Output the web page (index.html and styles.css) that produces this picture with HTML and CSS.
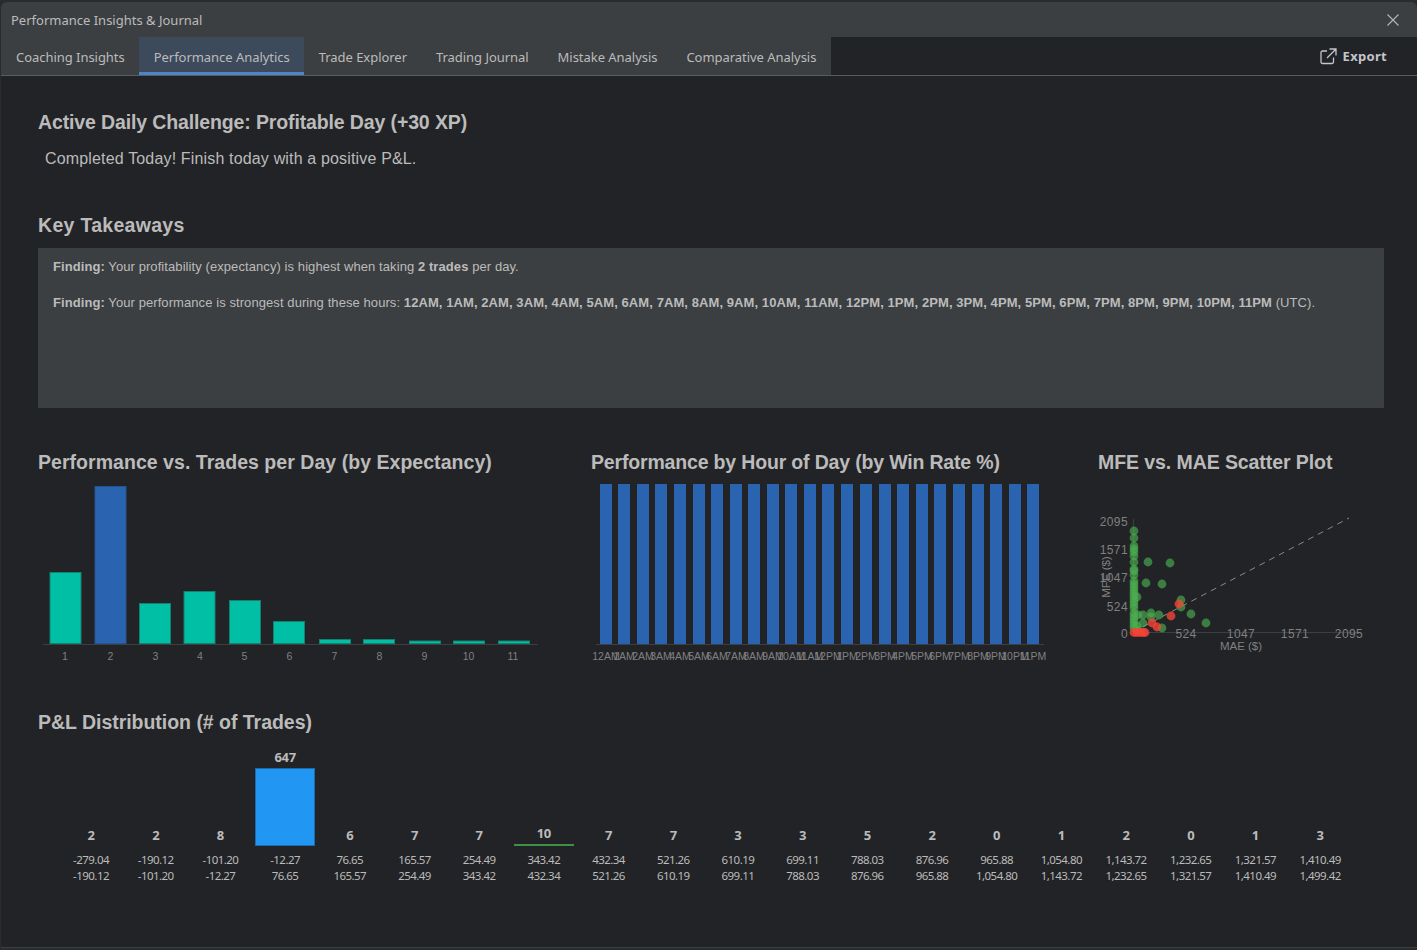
FILE: index.html
```html
<!DOCTYPE html>
<html lang="en">
  <head>
    <meta charset="utf-8" />
    <title>Performance Insights &amp; Journal</title>
    <link rel="stylesheet" href="styles.css">
  </head>
  <body>
    <div class="window">
      <header class="titlebar">
        <span class="title">Performance Insights &amp; Journal</span>
        <svg class="close" width="14" height="14" viewBox="0 0 14 14"><path d="M1.5 1.5 L12.5 12.5 M12.5 1.5 L1.5 12.5" /></svg>
      </header>

      <nav class="tabbar">
        <div class="tabs">
          <a class="tab">Coaching Insights</a>
          <a class="tab active">Performance Analytics</a>
          <a class="tab">Trade Explorer</a>
          <a class="tab">Trading Journal</a>
          <a class="tab">Mistake Analysis</a>
          <a class="tab">Comparative Analysis</a>
        </div>
        <a class="export">
          <svg width="17" height="17" viewBox="0 0 17 17"><path d="M7 3 H2.5 A1.5 1.5 0 0 0 1 4.5 V14 A1.5 1.5 0 0 0 2.5 15.5 H12 A1.5 1.5 0 0 0 13.5 14 V9.5 M7 10 L15.5 1.5 M9.5 1 H16 V7.5" /></svg>
          Export
        </a>
      </nav>

      <main class="content">
        <h2 class="challenge-title">Active Daily Challenge: Profitable Day (+30 XP)</h2>
        <p class="challenge-text">Completed Today! Finish today with a positive P&amp;L.</p>

        <h2 class="takeaways-title">Key Takeaways</h2>
        <div class="takeaways">
          <p><b>Finding:</b> Your profitability (expectancy) is highest when taking <b>2 trades</b> per day.</p>
          <p><b>Finding:</b> Your performance is strongest during these hours: <b>12AM, 1AM, 2AM, 3AM, 4AM, 5AM, 6AM, 7AM, 8AM, 9AM, 10AM, 11AM, 12PM, 1PM, 2PM, 3PM, 4PM, 5PM, 6PM, 7PM, 8PM, 9PM, 10PM, 11PM</b> (UTC).</p>
        </div>

        <div class="charts">
          <section>
            <h2 class="days-title">Performance vs. Trades per Day (by Expectancy)</h2>
            <svg class="chart" width="510" height="190" viewBox="38 478 510 190">
              <g class="teal">
                <rect x="50" y="572.5" width="31" height="71" />
                <rect x="139.5" y="603.5" width="31" height="40" />
                <rect x="184" y="591.5" width="31" height="52" />
                <rect x="229.5" y="600.5" width="31" height="43" />
                <rect x="273.5" y="621.5" width="31" height="22" />
                <rect x="319.5" y="639.5" width="31" height="4" />
                <rect x="363.5" y="639.5" width="31" height="4" />
                <rect x="409.5" y="641" width="31" height="2.5" />
                <rect x="453.5" y="641" width="31" height="2.5" />
                <rect x="498.5" y="641" width="31" height="2.5" />
              </g>
              <rect class="blue" x="95" y="486.5" width="31" height="157" />
              <line class="axis" x1="43" y1="644.5" x2="538" y2="644.5" />
              <g class="tick">
                <text x="65" y="660">1</text>
                <text x="110.5" y="660">2</text>
                <text x="155.5" y="660">3</text>
                <text x="200" y="660">4</text>
                <text x="244.5" y="660">5</text>
                <text x="289.5" y="660">6</text>
                <text x="334.5" y="660">7</text>
                <text x="379.5" y="660">8</text>
                <text x="424.5" y="660">9</text>
                <text x="468.5" y="660">10</text>
                <text x="513" y="660">11</text>
              </g>
            </svg>
          </section>

          <section>
            <h2 class="hour-title">Performance by Hour of Day (by Win Rate %)</h2>
            <svg class="chart" width="470" height="190" viewBox="585 478 470 190">
              <g class="hour">
                <rect x="600" y="484" width="12" height="160" />
                <rect x="618" y="484" width="12" height="160" />
                <rect x="637" y="484" width="12" height="160" />
                <rect x="655" y="484" width="12" height="160" />
                <rect x="674" y="484" width="12" height="160" />
                <rect x="693" y="484" width="12" height="160" />
                <rect x="711" y="484" width="12" height="160" />
                <rect x="730" y="484" width="12" height="160" />
                <rect x="748" y="484" width="12" height="160" />
                <rect x="767" y="484" width="12" height="160" />
                <rect x="785" y="484" width="12" height="160" />
                <rect x="804" y="484" width="12" height="160" />
                <rect x="822" y="484" width="12" height="160" />
                <rect x="841" y="484" width="12" height="160" />
                <rect x="860" y="484" width="12" height="160" />
                <rect x="879" y="484" width="12" height="160" />
                <rect x="897" y="484" width="12" height="160" />
                <rect x="916" y="484" width="12" height="160" />
                <rect x="934" y="484" width="12" height="160" />
                <rect x="953" y="484" width="12" height="160" />
                <rect x="972" y="484" width="12" height="160" />
                <rect x="990" y="484" width="12" height="160" />
                <rect x="1009" y="484" width="12" height="160" />
                <rect x="1027" y="484" width="12" height="160" />
              </g>
              <line class="axis" x1="596" y1="644.5" x2="1044" y2="644.5" />
              <g class="tick">
                <text x="606" y="660">12AM</text>
                <text x="624" y="660">1AM</text>
                <text x="643" y="660">2AM</text>
                <text x="661" y="660">3AM</text>
                <text x="680" y="660">4AM</text>
                <text x="699" y="660">5AM</text>
                <text x="717" y="660">6AM</text>
                <text x="736" y="660">7AM</text>
                <text x="754" y="660">8AM</text>
                <text x="773" y="660">9AM</text>
                <text x="791" y="660">10AM</text>
                <text x="810" y="660">11AM</text>
                <text x="828" y="660">12PM</text>
                <text x="847" y="660">1PM</text>
                <text x="866" y="660">2PM</text>
                <text x="885" y="660">3PM</text>
                <text x="903" y="660">4PM</text>
                <text x="922" y="660">5PM</text>
                <text x="940" y="660">6PM</text>
                <text x="959" y="660">7PM</text>
                <text x="978" y="660">8PM</text>
                <text x="996" y="660">9PM</text>
                <text x="1015" y="660">10PM</text>
                <text x="1033" y="660">11PM</text>
              </g>
            </svg>
          </section>

          <section>
            <h2 class="scatter-title">MFE vs. MAE Scatter Plot</h2>
            <svg class="chart" width="270" height="190" viewBox="1098 478 270 190">
              <line class="axis" x1="1133.5" y1="519" x2="1133.5" y2="632.5" />
              <line class="axis" x1="1133" y1="632.5" x2="1360" y2="632.5" />
              <line class="diagonal" x1="1133" y1="632" x2="1349" y2="518" />
              <g class="win">
                <circle cx="1134" cy="531" r="4.4" />
                <circle cx="1134" cy="538" r="4.4" />
                <circle cx="1134" cy="546" r="4.4" />
                <circle cx="1134" cy="549" r="4.4" />
                <circle cx="1134" cy="552" r="4.4" />
                <circle cx="1134" cy="556" r="4.4" />
                <circle cx="1134" cy="562" r="4.4" />
                <circle cx="1134" cy="569" r="4.4" />
                <circle cx="1134" cy="571" r="4.4" />
                <circle cx="1134" cy="575" r="4.4" />
                <circle cx="1134" cy="581" r="4.4" />
                <circle cx="1134" cy="584" r="4.4" />
                <circle cx="1134" cy="587" r="4.4" />
                <circle cx="1134" cy="590" r="4.4" />
                <circle cx="1134" cy="593" r="4.4" />
                <circle cx="1134" cy="596" r="4.4" />
                <circle cx="1134" cy="599" r="4.4" />
                <circle cx="1134" cy="602" r="4.4" />
                <circle cx="1134" cy="605" r="4.4" />
                <circle cx="1134" cy="608" r="4.4" />
                <circle cx="1134" cy="613" r="4.4" />
                <circle cx="1134" cy="616" r="4.4" />
                <circle cx="1134" cy="619" r="4.4" />
                <circle cx="1134" cy="622" r="4.4" />
                <circle cx="1134" cy="625" r="4.4" />
                <circle cx="1134" cy="628" r="4.4" />
                <circle cx="1137" cy="626" r="4.4" />
                <circle cx="1138" cy="630" r="4.4" />
                <circle cx="1137" cy="597" r="4.4" />
                <circle cx="1138" cy="615" r="4.4" />
                <circle cx="1143" cy="615" r="4.4" />
                <circle cx="1143" cy="623" r="4.4" />
                <circle cx="1148" cy="562" r="4.4" />
                <circle cx="1170" cy="563" r="4.4" />
                <circle cx="1146" cy="583" r="4.4" />
                <circle cx="1162" cy="584" r="4.4" />
                <circle cx="1181" cy="600" r="4.4" />
                <circle cx="1181" cy="607" r="4.4" />
                <circle cx="1191" cy="614" r="4.4" />
                <circle cx="1206" cy="623" r="4.4" />
                <circle cx="1159" cy="615" r="4.4" />
                <circle cx="1151" cy="613" r="4.4" />
                <circle cx="1151" cy="617" r="4.4" />
                <circle cx="1162" cy="628" r="4.4" />
              </g>
              <g class="loss">
                <circle cx="1179" cy="604" r="4.4" />
                <circle cx="1171" cy="616" r="4.4" />
                <circle cx="1152" cy="623" r="4.4" />
                <circle cx="1157" cy="627" r="4.4" />
                <circle cx="1134" cy="632.5" r="4.4" />
                <circle cx="1137" cy="632.5" r="4.4" />
                <circle cx="1140" cy="632.5" r="4.4" />
                <circle cx="1143" cy="632.5" r="4.4" />
                <circle cx="1145" cy="632.5" r="4.4" />
              </g>
              <g class="scatter-y">
                <text x="1128" y="526">2095</text>
                <text x="1128" y="554">1571</text>
                <text x="1128" y="582">1047</text>
                <text x="1128" y="611">524</text>
                <text x="1128" y="638">0</text>
              </g>
              <g class="scatter-x">
                <text x="1186" y="638">524</text>
                <text x="1241" y="638">1047</text>
                <text x="1295" y="638">1571</text>
                <text x="1349" y="638">2095</text>
              </g>
              <text class="axis-name" x="1241" y="650">MAE ($)</text>
              <text class="axis-name" x="1110" y="577" transform="rotate(-90 1110 577)">MFE ($)</text>
            </svg>
          </section>
        </div>

        <h2 class="dist-title">P&amp;L Distribution (# of Trades)</h2>
        <div class="hist">
          <div class="bin"><b>2</b><i class="bar"></i><span>-279.04<br>-190.12</span></div>
          <div class="bin"><b>2</b><i class="bar"></i><span>-190.12<br>-101.20</span></div>
          <div class="bin"><b>8</b><i class="bar"></i><span>-101.20<br>-12.27</span></div>
          <div class="bin"><b>647</b><i class="bar peak" style="height: 78px"></i><span>-12.27<br>76.65</span></div>
          <div class="bin"><b>6</b><i class="bar"></i><span>76.65<br>165.57</span></div>
          <div class="bin"><b>7</b><i class="bar"></i><span>165.57<br>254.49</span></div>
          <div class="bin"><b>7</b><i class="bar"></i><span>254.49<br>343.42</span></div>
          <div class="bin"><b>10</b><i class="bar hit" style="height: 2px"></i><span>343.42<br>432.34</span></div>
          <div class="bin"><b>7</b><i class="bar"></i><span>432.34<br>521.26</span></div>
          <div class="bin"><b>7</b><i class="bar"></i><span>521.26<br>610.19</span></div>
          <div class="bin"><b>3</b><i class="bar"></i><span>610.19<br>699.11</span></div>
          <div class="bin"><b>3</b><i class="bar"></i><span>699.11<br>788.03</span></div>
          <div class="bin"><b>5</b><i class="bar"></i><span>788.03<br>876.96</span></div>
          <div class="bin"><b>2</b><i class="bar"></i><span>876.96<br>965.88</span></div>
          <div class="bin"><b>0</b><i class="bar"></i><span>965.88<br>1,054.80</span></div>
          <div class="bin"><b>1</b><i class="bar"></i><span>1,054.80<br>1,143.72</span></div>
          <div class="bin"><b>2</b><i class="bar"></i><span>1,143.72<br>1,232.65</span></div>
          <div class="bin"><b>0</b><i class="bar"></i><span>1,232.65<br>1,321.57</span></div>
          <div class="bin"><b>1</b><i class="bar"></i><span>1,321.57<br>1,410.49</span></div>
          <div class="bin"><b>3</b><i class="bar"></i><span>1,410.49<br>1,499.42</span></div>
        </div>
      </main>
    </div>
  </body>
</html>
```

FILE: styles.css
```css
html, body {
  margin: 0;
  height: 100%;
  background: #2a2b2d;
  overflow: hidden;
}
body {
  padding-top: 2px;
  box-sizing: border-box;
  font-family: "Liberation Sans", Arial, sans-serif;
  color: #bbbbbb;
}
.window {
  height: 946px;
  margin-left: 1px;
  border-radius: 6px 6px 0 0;
  background: #3c3f41;
  overflow: hidden;
}

/* title + tabs use the UI font */
.titlebar {
  height: 35px;
  padding: 0 17px 0 10px;
  display: flex;
  align-items: center;
  justify-content: space-between;
  font: 13px "Noto Sans", sans-serif;
}
.close {
  fill: none;
  stroke: #b4b4b4;
  stroke-width: 1.1;
}
.tabbar {
  height: 38px;
  display: flex;
  justify-content: space-between;
  background: #222326;
  border-bottom: 1px solid #5a5c5e;
  font: 13px "Noto Sans", sans-serif;
}
.tabs {
  display: flex;
  background: #3c3f41;
  padding-left: 0.5px;
}
.tab {
  padding: 11px 14.5px 0;
  height: 27px;
  letter-spacing: -0.04px;
}
.tab.active {
  height: 24px;
  background: #3d4a5c;
  border-bottom: 3px solid #4a86c8;
}
.export {
  display: flex;
  align-items: center;
  gap: 6px;
  padding-right: 30px;
  font-weight: 700;
  color: #c2c6ca;
  letter-spacing: 0.3px;
}
.export svg {
  fill: none;
  stroke: #c2c6ca;
  stroke-width: 1.3;
}

.content {
  height: 871px;
  padding: 0 33px 0 37px;
  background: #222326;
}
h2 {
  margin: 0;
  font-size: 19.5px;
  line-height: 24px;
  font-weight: 700;
  color: #bbbbbb;
}
.challenge-title {
  padding-top: 34px;
  letter-spacing: -0.13px;
}
.challenge-text {
  margin: 15px 0 0 7px;
  font-size: 16px;
  line-height: 20px;
  letter-spacing: 0.16px;
}
.takeaways-title {
  margin-top: 44px;
  letter-spacing: 0.3px;
}
.takeaways {
  height: 160px;
  margin-top: 11px;
  padding: 0 15px;
  box-sizing: border-box;
  background: #3c3f41;
  font-size: 13px;
  line-height: 16px;
  letter-spacing: 0.08px;
  overflow: hidden;
}
.takeaways p {
  margin: 0;
  padding-top: 11px;
  padding-bottom: 9px;
}

.charts {
  display: grid;
  grid-template-columns: 553px 507px 1fr;
  margin-top: 42px;
}
.charts section {
  height: 212px;
}
.days-title {
  letter-spacing: 0.04px;
}
.hour-title {
  letter-spacing: -0.17px;
}
.scatter-title {
  letter-spacing: -0.08px;
}
.chart {
  display: block;
  margin-top: 4px;
}
.charts section:nth-child(2) .chart {
  margin-left: -6px;
}
.teal rect {
  fill: #00bfa5;
  stroke: #14806f;
}
.blue {
  fill: #2a64b0;
  stroke: #25558f;
}
.hour rect {
  fill: #2a64b0;
}
.axis {
  stroke: #3c3f41;
}
.tick text {
  fill: #808080;
  font-size: 10.5px;
  text-anchor: middle;
}
.diagonal {
  stroke: #8a8a8a;
  stroke-dasharray: 6 5;
}
.win circle {
  fill: #4caf50;
  fill-opacity: 0.65;
}
.loss circle {
  fill: #f44336;
  fill-opacity: 0.8;
}
.scatter-y text, .scatter-x text {
  fill: #808080;
  font-size: 12px;
  letter-spacing: 0.4px;
}
.scatter-y text {
  text-anchor: end;
}
.scatter-x text {
  text-anchor: middle;
}
.axis-name {
  fill: #808080;
  font-size: 11.5px;
  text-anchor: middle;
}

.dist-title {
  margin-top: 48px;
  letter-spacing: -0.03px;
}
.hist {
  display: flex;
  margin: 13px 0 0 20.7px;
  font-family: "Noto Sans", sans-serif;
}
.bin {
  width: 64.7px;
  height: 137px;
  display: flex;
  flex-direction: column;
  align-items: center;
  justify-content: flex-end;
  font-size: 11.5px;
  line-height: 16px;
  text-align: center;
  letter-spacing: -0.55px;
}
.bin b {
  font-size: 13px;
  margin-bottom: 3px;
  letter-spacing: -0.3px;
}
.bar {
  width: 60px;
  box-sizing: border-box;
}
.bar.peak {
  background: #2196f3;
  border: 1px solid #1a6bb0;
}
.bar.hit {
  background: #3f8f46;
}
.bin span {
  margin-top: 6px;
}
```
